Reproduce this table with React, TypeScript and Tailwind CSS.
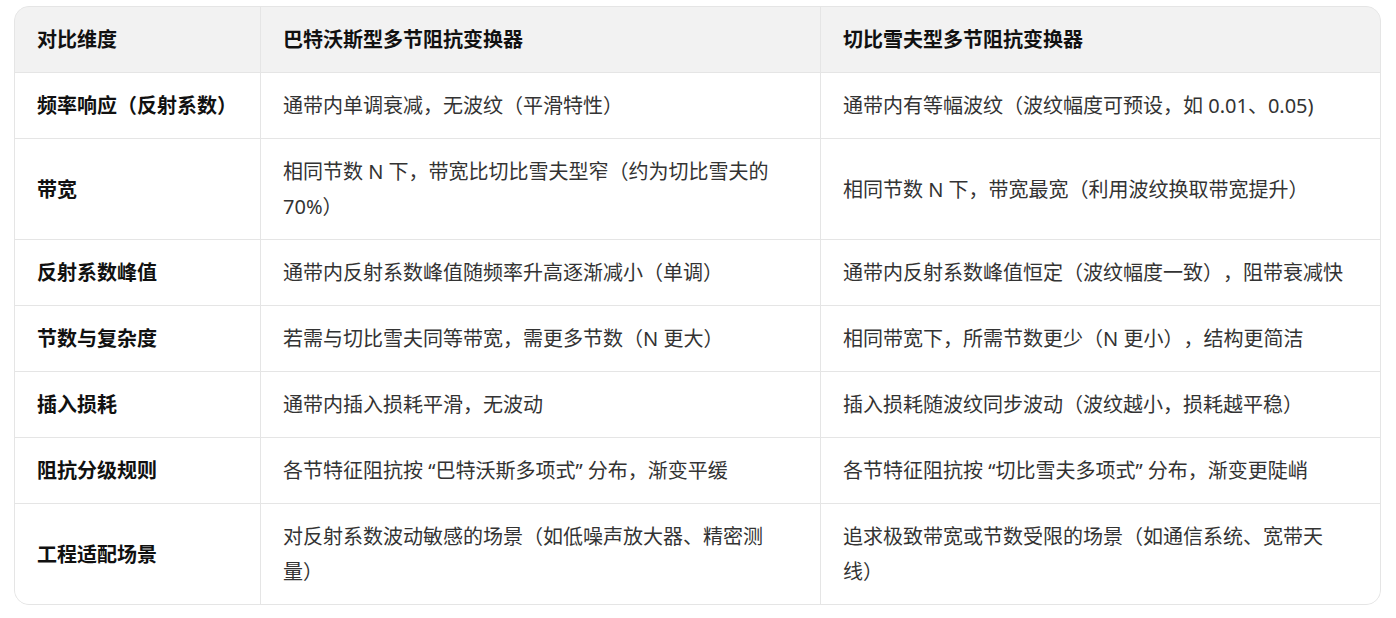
import React from "react";

const rows: [string, string, string][] = [
  ["频率响应（反射系数）", "通带内单调衰减，无波纹（平滑特性）", "通带内有等幅波纹（波纹幅度可预设，如 0.01、0.05)"],
  ["带宽", "相同节数 N 下，带宽比切比雪夫型窄（约为切比雪夫的 70%）", "相同节数 N 下，带宽最宽（利用波纹换取带宽提升）"],
  ["反射系数峰值", "通带内反射系数峰值随频率升高逐渐减小（单调）", "通带内反射系数峰值恒定（波纹幅度一致），阻带衰减快"],
  ["节数与复杂度", "若需与切比雪夫同等带宽，需更多节数（N 更大）", "相同带宽下，所需节数更少（N 更小），结构更简洁"],
  ["插入损耗", "通带内插入损耗平滑，无波动", "插入损耗随波纹同步波动（波纹越小，损耗越平稳）"],
  ["阻抗分级规则", "各节特征阻抗按 “巴特沃斯多项式” 分布，渐变平缓", "各节特征阻抗按 “切比雪夫多项式” 分布，渐变更陡峭"],
  ["工程适配场景", "对反射系数波动敏感的场景（如低噪声放大器、精密测量）", "追求极致带宽或节数受限的场景（如通信系统、宽带天线）"],
];

const headers = ["对比维度", "巴特沃斯型多节阻抗变换器", "切比雪夫型多节阻抗变换器"];

export default function App() {
  return (
    <div
      className="min-h-[618px] w-[1396px] bg-white pl-[14px] pt-[6px] [text-spacing-trim:space-all]"
      style={{ fontFamily: '"Noto Sans", "Noto Sans CJK SC", sans-serif' }}
    >
      <div className="w-[1367px] overflow-hidden rounded-[15px] border border-[#e5e5e5] bg-[#e5e5e5]">
        <div className="grid grid-cols-[245px_559px_559px] grid-rows-[65px_65px_100px_65px_65px_65px_65px_100px] gap-px">
          {headers.map((h) => (
            <div
              key={h}
              className="flex items-center bg-[#f2f2f2] px-[22px] text-[20px] font-bold leading-[35px] text-[#111111]"
            >
              {h}
            </div>
          ))}
          {rows.map((r) => (
            <React.Fragment key={r[0]}>
              <div className="flex items-center bg-white px-[22px] text-[20px] font-bold leading-[35px] text-[#111111]">
                {r[0]}
              </div>
              <div className="flex items-center bg-white px-[22px] text-[20px] leading-[35px] text-[#333333]">
                <span>{r[1]}</span>
              </div>
              <div className="flex items-center bg-white px-[22px] text-[20px] leading-[35px] text-[#333333]">
                <span>{r[2]}</span>
              </div>
            </React.Fragment>
          ))}
        </div>
      </div>
    </div>
  );
}
